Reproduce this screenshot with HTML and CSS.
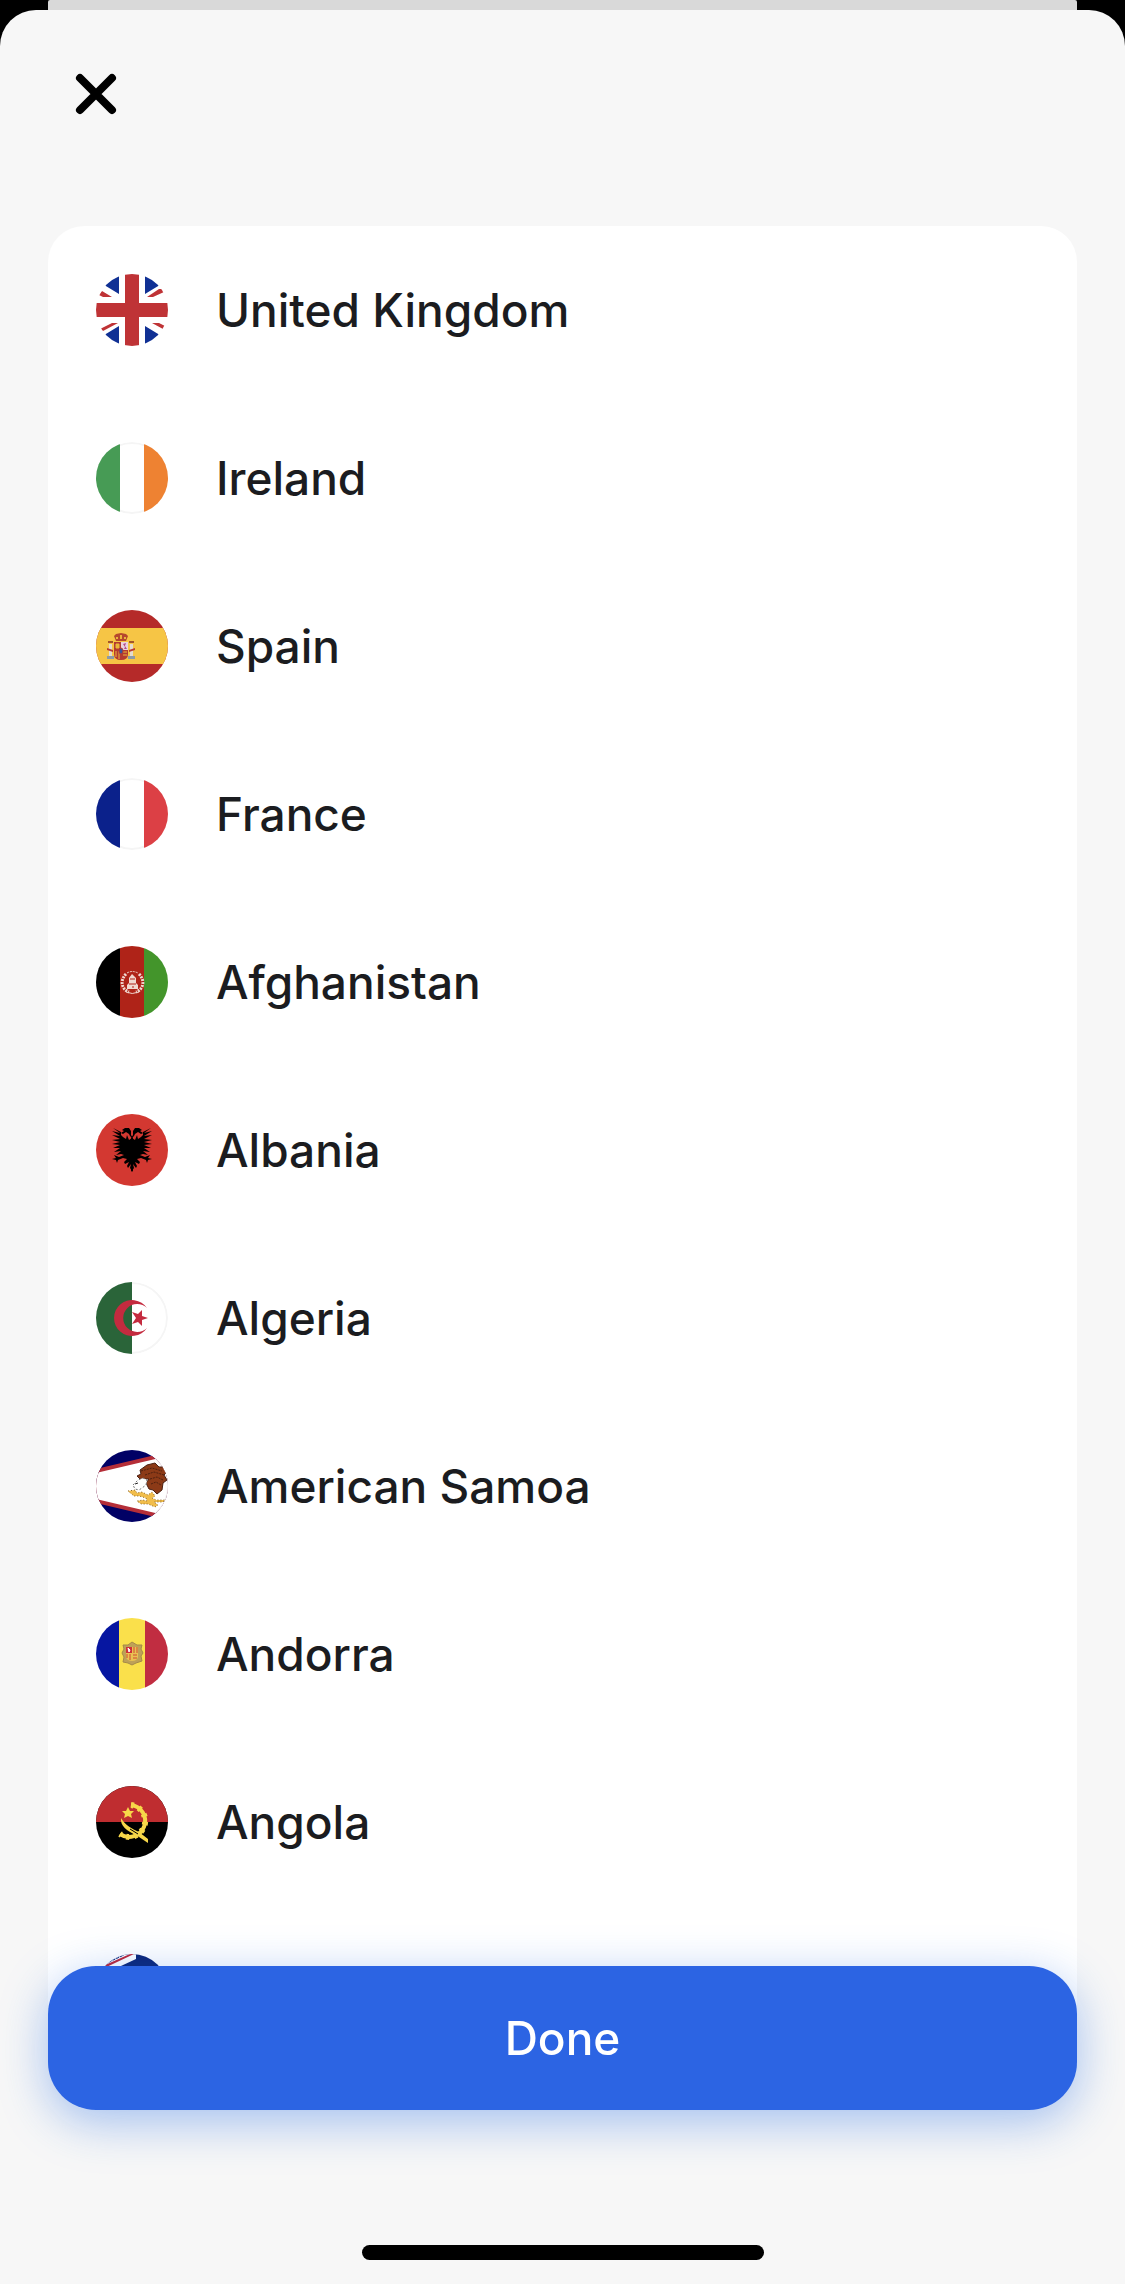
FILE: index.html
```html
<!DOCTYPE html>
<html lang="en">
<head>
    <meta charset="utf-8">
    <meta name="viewport" content="width=device-width, initial-scale=1">
    <title>Choose a country</title>
    <link rel="stylesheet" href="styles.css">
</head>

<body>
    <div class="backdrop"></div>
    <main class="sheet">
        <header class="sheet-header">
            <button class="close-btn" type="button" aria-label="Close">
                <svg viewBox="0 0 48 48" aria-hidden="true">
                    <path d="M8 8 40 40M40 8 8 40" fill="none" stroke="#000" stroke-width="8" stroke-linecap="round"/>
                </svg>
            </button>
        </header>

        <ul class="country-list">
            <li>
                <button class="country" type="button">
                    <svg class="flag" viewBox="0 0 72 72" aria-hidden="true">
                        <rect width="72" height="72" fill="#fff"/>
                        <path d="M0 0H23V20L0 6ZM72 0H49V20L72 6ZM0 72H23V52L0 66ZM72 72H49V52L72 66Z" fill="#103094"/>
                        <path d="M6 17 3 21 7 23H16ZM67 15H63L51 23H57L68 18ZM4 55 7 57 22 49H16ZM56 49H63L69 52 67 55Z" fill="#bf3336"/>
                        <path d="M29 0H43V29H72V43H43V72H29V43H0V29H29Z" fill="#bf3336"/>
                    </svg>
                    <span>United Kingdom</span>
                </button>
            </li>
            <li>
                <button class="country" type="button">
                    <svg class="flag" viewBox="0 0 72 72" aria-hidden="true">
                        <rect width="72" height="72" fill="#fff"/>
                        <circle cx="36" cy="36" r="35" fill="none" stroke="#f5f5f5" stroke-width="2"/>
                        <rect width="24" height="72" fill="#479b55"/>
                        <rect x="48" width="24" height="72" fill="#ee8232"/>
                    </svg>
                    <span>Ireland</span>
                </button>
            </li>
            <li>
                <button class="country" type="button">
                    <svg class="flag" viewBox="0 0 72 72" aria-hidden="true">
                        <rect width="72" height="72" fill="#b52a29"/>
                        <rect y="18" width="72" height="36" fill="#f6c545"/>
                        <!-- pillars -->
                        <path d="M13 34H16V46H13ZM34 34H37V46H34Z" fill="#e4dccf"/>
                        <path d="M12 31H17V33H12ZM33 31H38V33H33Z" fill="#a3552a"/>
                        <path d="M11 46H18V49H11ZM32 46H39V49H32Z" fill="#8d9aa5"/>
                        <path d="M11 38 17 40V42L11 40ZM39 38 33 40V42L39 40Z" fill="#b93a31"/>
                        <!-- crown and shield -->
                        <path d="M18 26 20 24 25 23 30 24 32 26 30 31H20Z" fill="#b5482d"/>
                        <path d="M20 27H22V29H20ZM24 25H26V29H24ZM28 27H30V29H28Z" fill="#e9b83a"/>
                        <path d="M18 32H32V44Q32 50 25 50Q18 50 18 44Z" fill="#b43a30"/>
                        <path d="M25 32H32V40H25Z" fill="#ead3de"/>
                        <path d="M27 34 30 33 29 36 31 39H28L29 37Z" fill="#b3488a"/>
                        <path d="M20 34H23V38H20ZM20 41V47M23 41V49M27 42H31M27 45H31" fill="#e9b83a" stroke="#e9b83a"/>
                        <ellipse cx="25" cy="41" rx="2" ry="3" fill="#38539a" stroke="#b43a30"/>
                    </svg>
                    <span>Spain</span>
                </button>
            </li>
            <li>
                <button class="country" type="button">
                    <svg class="flag" viewBox="0 0 72 72" aria-hidden="true">
                        <rect width="72" height="72" fill="#fff"/>
                        <circle cx="36" cy="36" r="35" fill="none" stroke="#f5f5f5" stroke-width="2"/>
                        <rect width="24" height="72" fill="#0b218b"/>
                        <rect x="48" width="24" height="72" fill="#dc4045"/>
                    </svg>
                    <span>France</span>
                </button>
            </li>
            <li>
                <button class="country" type="button">
                    <svg class="flag" viewBox="0 0 72 72" aria-hidden="true">
                        <rect width="24" height="72" fill="#000"/>
                        <rect x="24" width="24" height="72" fill="#af2318"/>
                        <rect x="48" width="24" height="72" fill="#43952b"/>
                        <g fill="none" stroke="#f0d8d0">
                            <path d="M30 28C24 34 25 43 33 46M43 28C49 34 48 43 40 46" stroke-width="3" stroke-dasharray="2 1"/>
                            <path d="M31 27Q36 24 42 27" stroke-dasharray="2 1"/>
                            <path d="M30 46Q36 49 43 46"/>
                        </g>
                        <path d="M36 28 40 32V37L42 39V43H31V39L33 37V32Z" fill="#f0d8d0"/>
                        <path d="M34 33H39M33 38H40M36 41H38" stroke="#af2318"/>
                    </svg>
                    <span>Afghanistan</span>
                </button>
            </li>
            <li>
                <button class="country" type="button">
                    <svg class="flag" viewBox="0 0 72 72" aria-hidden="true">
                        <rect width="72" height="72" fill="#d33831"/>
                        <path id="eagle-half" d="M36 24 34 22 33 20 30 18 27 20 25 19 28 17 26 16 29 14 33 14 35 17 35 21 37 24V58L34 54 35 50 32 54 31 52 33 48 29 50 28 48 31 45 27 44 22 46 21 49 20 46 16 45 20 44 18 41 23 43 28 41 25 40 20 41 25 37 18 38 24 34 17 34 24 31 16 30 24 28 16 26 24 25 16 21 24 22 16 17 24 19 17 14 25 18 25 21 27 23 30 25 31 21 33 26Z"/>
                        <use href="#eagle-half" transform="matrix(-1 0 0 1 72 0)"/>
                    </svg>
                    <span>Albania</span>
                </button>
            </li>
            <li>
                <button class="country" type="button">
                    <svg class="flag" viewBox="0 0 72 72" aria-hidden="true">
                        <rect width="72" height="72" fill="#fff"/>
                        <circle cx="36" cy="36" r="35" fill="none" stroke="#f5f5f5" stroke-width="2"/>
                        <rect width="36" height="72" fill="#2a6439"/>
                        <path d="M51 26A18 18 0 1 0 51 46A14 14 0 1 1 51 26Z" fill="#c42b3f"/>
                        <path d="M52 36 46 38V44L42 40 36 42 40 36 36 30 42 32 46 28V34Z" fill="#c42b3f"/>
                    </svg>
                    <span>Algeria</span>
                </button>
            </li>
            <li>
                <button class="country" type="button">
                    <svg class="flag" viewBox="0 0 72 72" aria-hidden="true">
                        <rect width="72" height="72" fill="#010165"/>
                        <path d="M-4 20 72 2V70L-4 52Z" fill="#b52e38"/>
                        <path d="M-4 24 72 6V66L-4 48Z" fill="#fff"/>
                        <path d="M61 10A36 36 0 0 1 61 62" fill="none" stroke="#f3f3f3" stroke-width="2"/>
                        <path d="M44 20 51 15 59 13 63 17 69 17 71 22 68 25 71 30 67 33 66 40 61 44 57 40 53 39 50 33 53 29 44 29 41 26 45 24Z" fill="#8c3a17" stroke="#4a2114"/>
                        <path d="M45 21 56 18 66 21M49 25 58 22 68 25M54 29 61 27 67 30M55 34 60 32 65 35" fill="none" stroke="#4e2010" stroke-dasharray="2 1"/>
                        <path d="M37 35 42 30 47 28 51 30 50 35 46 38 43 40 39 39Z" fill="#fff" stroke="#777" stroke-dasharray="2 2"/>
                        <path d="M39 34 42 33" stroke="#222"/>
                        <path d="M32 41 39 40 41 43 46 42 52 45 56 42 59 46 56 48 60 50 69 50 67 52 58 52 62 55 59 57 52 54 45 54 41 51 47 50 51 51 50 48 43 46 38 46Z" fill="#f1bd4b" stroke="#8a6425" stroke-dasharray="1 2"/>
                    </svg>
                    <span>American Samoa</span>
                </button>
            </li>
            <li>
                <button class="country" type="button">
                    <svg class="flag" viewBox="0 0 72 72" aria-hidden="true">
                        <rect width="23" height="72" fill="#0616a1"/>
                        <rect x="23" width="26" height="72" fill="#fae04b"/>
                        <rect x="49" width="23" height="72" fill="#c12d41"/>
                        <path d="M27 27 32 27 36 24 41 27 46 27 45 31 47 35 45 38 46 43 40 45 36 47 32 45 27 44 28 39 26 35 28 31Z" fill="#bea157" stroke="#a58a49"/>
                        <path d="M30 29H42V39Q41 43 36 43Q31 43 30 39Z" fill="#e9c252"/>
                        <path d="M30 29H36V35H30Z" fill="#cf3038"/>
                        <path d="M32 30 34 32 33 34Z" fill="#fff" stroke="#fff"/>
                        <path d="M38 29V35M41 29V35M31 36V40M34 36V42M37 37H41M37 40H41" stroke="#cf4a32"/>
                    </svg>
                    <span>Andorra</span>
                </button>
            </li>
            <li>
                <button class="country" type="button">
                    <svg class="flag" viewBox="0 0 72 72" aria-hidden="true">
                        <rect width="72" height="72" fill="#000"/>
                        <rect width="72" height="36" fill="#bf2d30"/>
                        <path d="M35 19A16 16 0 1 1 24 48" fill="none" stroke="#f7d749" stroke-width="4"/>
                        <path d="M35 19A16 16 0 1 1 24 48" fill="none" stroke="#f7d749" stroke-width="6" stroke-dasharray="3 5"/>
                        <path d="M32 21 34 25 38 25 35 28 36 32 32 30 28 32 29 28 26 25 30 25Z" fill="#f7d749"/>
                        <path d="M25 32C29 39 36 43 43 46L52 53V57L40 49C31 45 24 40 25 32Z" fill="#f7d749"/>
                        <path d="M34 43 42 48" stroke="#000"/>
                    </svg>
                    <span>Angola</span>
                </button>
            </li>
            <li>
                <button class="country" type="button">
                    <svg class="flag" viewBox="0 0 72 72" aria-hidden="true">
                        <rect width="72" height="72" fill="#0b2577"/>
                        <path d="M0 0H40V5L12 18H0Z" fill="#fff"/>
                        <path d="M34 0H38L0 18V15Z" fill="#bd2436"/>
                        <path d="M13 8 28 1" stroke="#0b2577" stroke-dasharray="3 1"/>
                        <path d="M0 30H40M20 18V36" stroke="#fff" stroke-width="8"/>
                    </svg>
                    <span>Anguilla</span>
                </button>
            </li>
        </ul>

        <footer class="sheet-footer">
            <button class="done-btn" type="button">Done</button>
            <div class="home-bar"></div>
        </footer>
    </main>
</body>

</html>
```
FILE: styles.css
```css
* {
    box-sizing: border-box;
}
body {
    display: flex;
    flex-direction: column;
    height: 100vh;
    margin: 0;
    background: #000;
    color: #1b1c20;
    font-family: Inter, "Liberation Sans", sans-serif;
}
button {
    border: none;
    background: none;
    color: inherit;
    font: inherit;
    cursor: pointer;
}
.backdrop {
    flex: none;
    height: 10px;
    margin: 0 48px;
    border-radius: 2px 2px 0 0;
    background: #d9d9d9;
}
.sheet {
    display: flex;
    flex: 1;
    flex-direction: column;
    min-height: 0;
    padding: 0 48px;
    border-radius: 36px 36px 0 0;
    background: #f7f7f7;
}
.sheet-header {
    flex: none;
    height: 216px;
    padding: 60px 24px;
}
.close-btn {
    display: block;
    width: 48px;
    height: 48px;
    padding: 0;
}
.close-btn svg {
    display: block;
}
.country-list {
    flex: 1;
    min-height: 0;
    margin: 0;
    padding: 0;
    overflow-y: auto;
    scrollbar-width: none;
    border-radius: 36px 36px 0 0;
    background: #fff;
    list-style: none;
}
.country {
    display: flex;
    align-items: center;
    gap: 48px;
    width: 100%;
    height: 168px;
    padding: 0 48px;
    font-size: 46px;
    font-weight: 500;
    text-align: left;
}
.flag {
    flex: none;
    width: 72px;
    height: 72px;
    border-radius: 50%;
}
/* the button covers the bottom edge of the list */
.sheet-footer {
    position: relative;
    flex: none;
    margin-top: -72px;
    padding-bottom: 24px;
}
.done-btn {
    display: block;
    width: 100%;
    height: 144px;
    border-radius: 48px;
    background: #2c64e3;
    box-shadow: 0 12px 48px rgba(36, 108, 227, 0.4);
    color: #fff;
    font-size: 46px;
    font-weight: 500;
}
.home-bar {
    width: 402px;
    height: 15px;
    margin: 135px auto 0;
    border-radius: 8px;
    background: #000;
}
```
